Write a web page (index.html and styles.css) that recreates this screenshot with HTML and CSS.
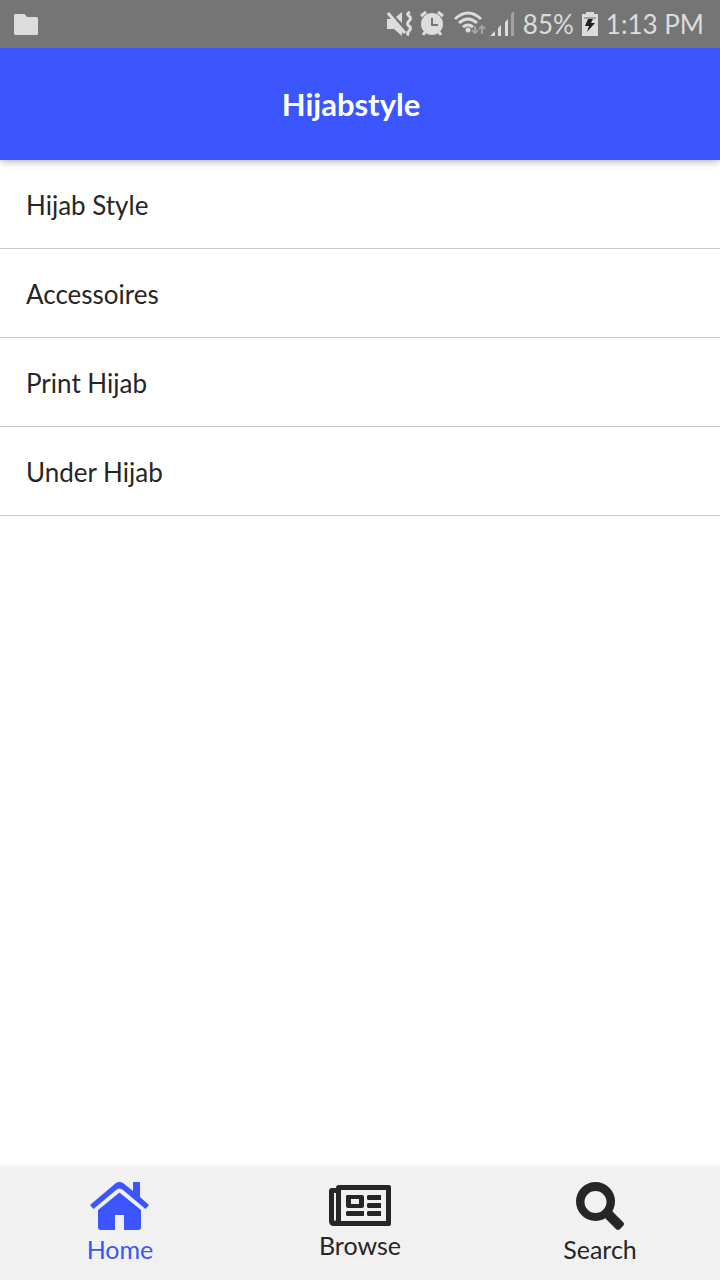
FILE: index.html
```html
<!DOCTYPE html>
<html lang="en">
<head>
<meta charset="utf-8">
<meta name="viewport" content="width=device-width, initial-scale=1">
<title>Hijabstyle</title>
<link rel="stylesheet" href="styles.css">
</head>
<body>
<div class="status">
  <svg class="status-folder" width="24" height="21" viewBox="0 0 24 21" aria-hidden="true"><path d="M1.500 0H10.500L13 3H22.500Q24 3 24 4.500V19.500Q24 21 22.500 21H1.500Q0 21 0 19.500V1.500Q0 0 1.500 0Z"/></svg>
  <svg class="status-signals" width="128" height="26" viewBox="0 0 128 26" aria-hidden="true">
    <path d="M0 8H6L15 17V25L7 18H0ZM9 6L15 1V12Z"/>
    <path class="line" d="M1 2L18 22"/>
    <path class="line" d="M23 1Q19 3 22 5T22 10T22 15T22 20T22 24"/>
    <circle cx="45" cy="13" r="11"/>
    <path class="line" d="M34 5L39 1M51 1L56 5M38 21L36 24M52 21L54 24"/>
    <path class="clock-hand" d="M45 7V14H51"/>
    <path class="line" d="M68 8Q81 -4 94 8M72 12Q81 4 90 12M76 16Q81 12 86 16"/>
    <circle cx="81" cy="19" r="2.500"/>
    <path class="faint-line" d="M88 15V22M85 19L88 22L91 19M95 23V15M92 18L95 15L98 18"/>
    <path d="M103 25L108 20V25ZM111 17L114 14V25H111ZM118 11L121 8V25H118Z"/>
    <path class="faint" d="M124 3L127 0V25H124Z"/>
  </svg>
  <span class="status-battery">85%</span>
  <svg width="16" height="24" viewBox="0 0 16 24" aria-hidden="true"><path d="M4 0H12V2H16V24H0V2H4Z"/><path class="faint" d="M2 5H14V7H2Z"/><path class="bolt" d="M6 7H11L9 11H13L5 20L7 14H3Z"/></svg>
  <span class="status-time">1:13 PM</span>
</div>
<header class="header"><h1 class="title">Hijabstyle</h1></header>
<main class="content">
  <ul class="list">
    <li><a class="row" href="#">Hijab Style</a></li>
    <li><a class="row" href="#">Accessoires</a></li>
    <li><a class="row" href="#">Print Hijab</a></li>
    <li><a class="row" href="#">Under Hijab</a></li>
  </ul>
</main>
<nav class="tabs">
  <a class="tab active" href="#">
    <svg width="60" height="48" viewBox="0 0 60 48" aria-hidden="true"><path d="M0 23L26 1Q29.500 -1 33 1L43 9V0H50V15L59 23L55.500 27L33 8Q29.500 5 26 8L3.500 27Z"/><path d="M29.500 10.500L51 28V45Q51 48 48 48H34V33H25V48H11Q8 48 8 45V28Z"/></svg>
    <span>Home</span>
  </a>
  <a class="tab" href="#">
    <svg width="62" height="41" viewBox="0 0 62 41" aria-hidden="true"><path fill-rule="evenodd" d="M10 0H60Q62 0 62 2V39Q62 41 60 41H5Q0 41 0 36V6Q0 3 3 3H7Q7 0 10 0ZM12 5V36H57V5ZM5 8V34Q5 36 6 36Q7 36 7 34V8Z"/><path fill-rule="evenodd" d="M18 10H33Q35 10 35 12V21Q35 23 33 23H19Q17 23 17 21V12Q17 10 18 10ZM22 14V19H30V14Z"/><path d="M39 10H52V15H39L38 14V11ZM39 18H52V23H39L38 22V19ZM39 26H52V31H39L38 30V27ZM18 26H35V31H18L17 30V27Z"/></svg>
    <span>Browse</span>
  </a>
  <a class="tab" href="#">
    <svg width="48" height="48" viewBox="0 0 48 48" aria-hidden="true"><path fill-rule="evenodd" d="M19.500 0A19.500 19.500 0 1 0 19.500 39A19.500 19.500 0 1 0 19.500 0ZM19.500 9A11 11 0 1 1 19.500 31A11 11 0 1 1 19.500 9Z"/><path d="M30 29H35Q37 29 38 31L47 40Q49 42 47 44L44 47Q42 49 40 47L31 38Q29 37 30 35Z"/></svg>
    <span>Search</span>
  </a>
</nav>
</body>
</html>
```
FILE: styles.css
```css
* { box-sizing: border-box; }
body {
  margin: 0;
  min-height: 100vh;
  display: flex;
  flex-direction: column;
  background: #fff;
  color: #262626;
  font-family: "Choco cooky", Lato, sans-serif;
  font-size: 26px;
  line-height: 32px;
}
a { color: inherit; text-decoration: none; }
svg { display: block; flex: none; fill: currentColor; }
.status {
  position: relative;
  z-index: 1;
  display: flex;
  align-items: center;
  height: 48px;
  padding: 0 16px 0 14px;
  background: #757575;
  color: #dcdcdc;
  white-space: nowrap;
}
.status-signals { margin-left: auto; }
.status-battery { margin: 0 8px; }
.status-time { margin-left: 8px; }
.line { fill: none; stroke: currentColor; stroke-width: 3; }
.clock-hand { fill: none; stroke: #757575; stroke-width: 2; }
.faint { fill: #a3a3a3; }
.faint-line { fill: none; stroke: #a3a3a3; stroke-width: 2; }
.bolt { fill: #222; }
.header {
  display: flex;
  align-items: center;
  justify-content: center;
  height: 112px;
  padding: 0 18px 0 0;
  background: #3b55ff;
  color: #fff;
  box-shadow: 0 1px 8px rgba(0, 0, 0, 0.35);
}
.title { margin: 0; font-size: 31px; line-height: 40px; font-weight: 700; }
.content { flex: 1; }
.list { margin: 0; padding: 0; list-style: none; }
.row {
  display: block;
  padding: 29px 26px 27px;
  border-bottom: 1px solid #c8c8c8;
}
.tabs {
  display: grid;
  grid-template-columns: repeat(3, 1fr);
  height: 113px;
  padding-bottom: 1px;
  background: #f1f1f1;
  box-shadow: 0 0 4px rgba(0, 0, 0, 0.1);
  font-size: 25px;
  line-height: 32px;
}
.tab {
  display: flex;
  flex-direction: column;
  align-items: center;
  justify-content: center;
  gap: 3px;
}
.active { color: #3b55ff; }
```
